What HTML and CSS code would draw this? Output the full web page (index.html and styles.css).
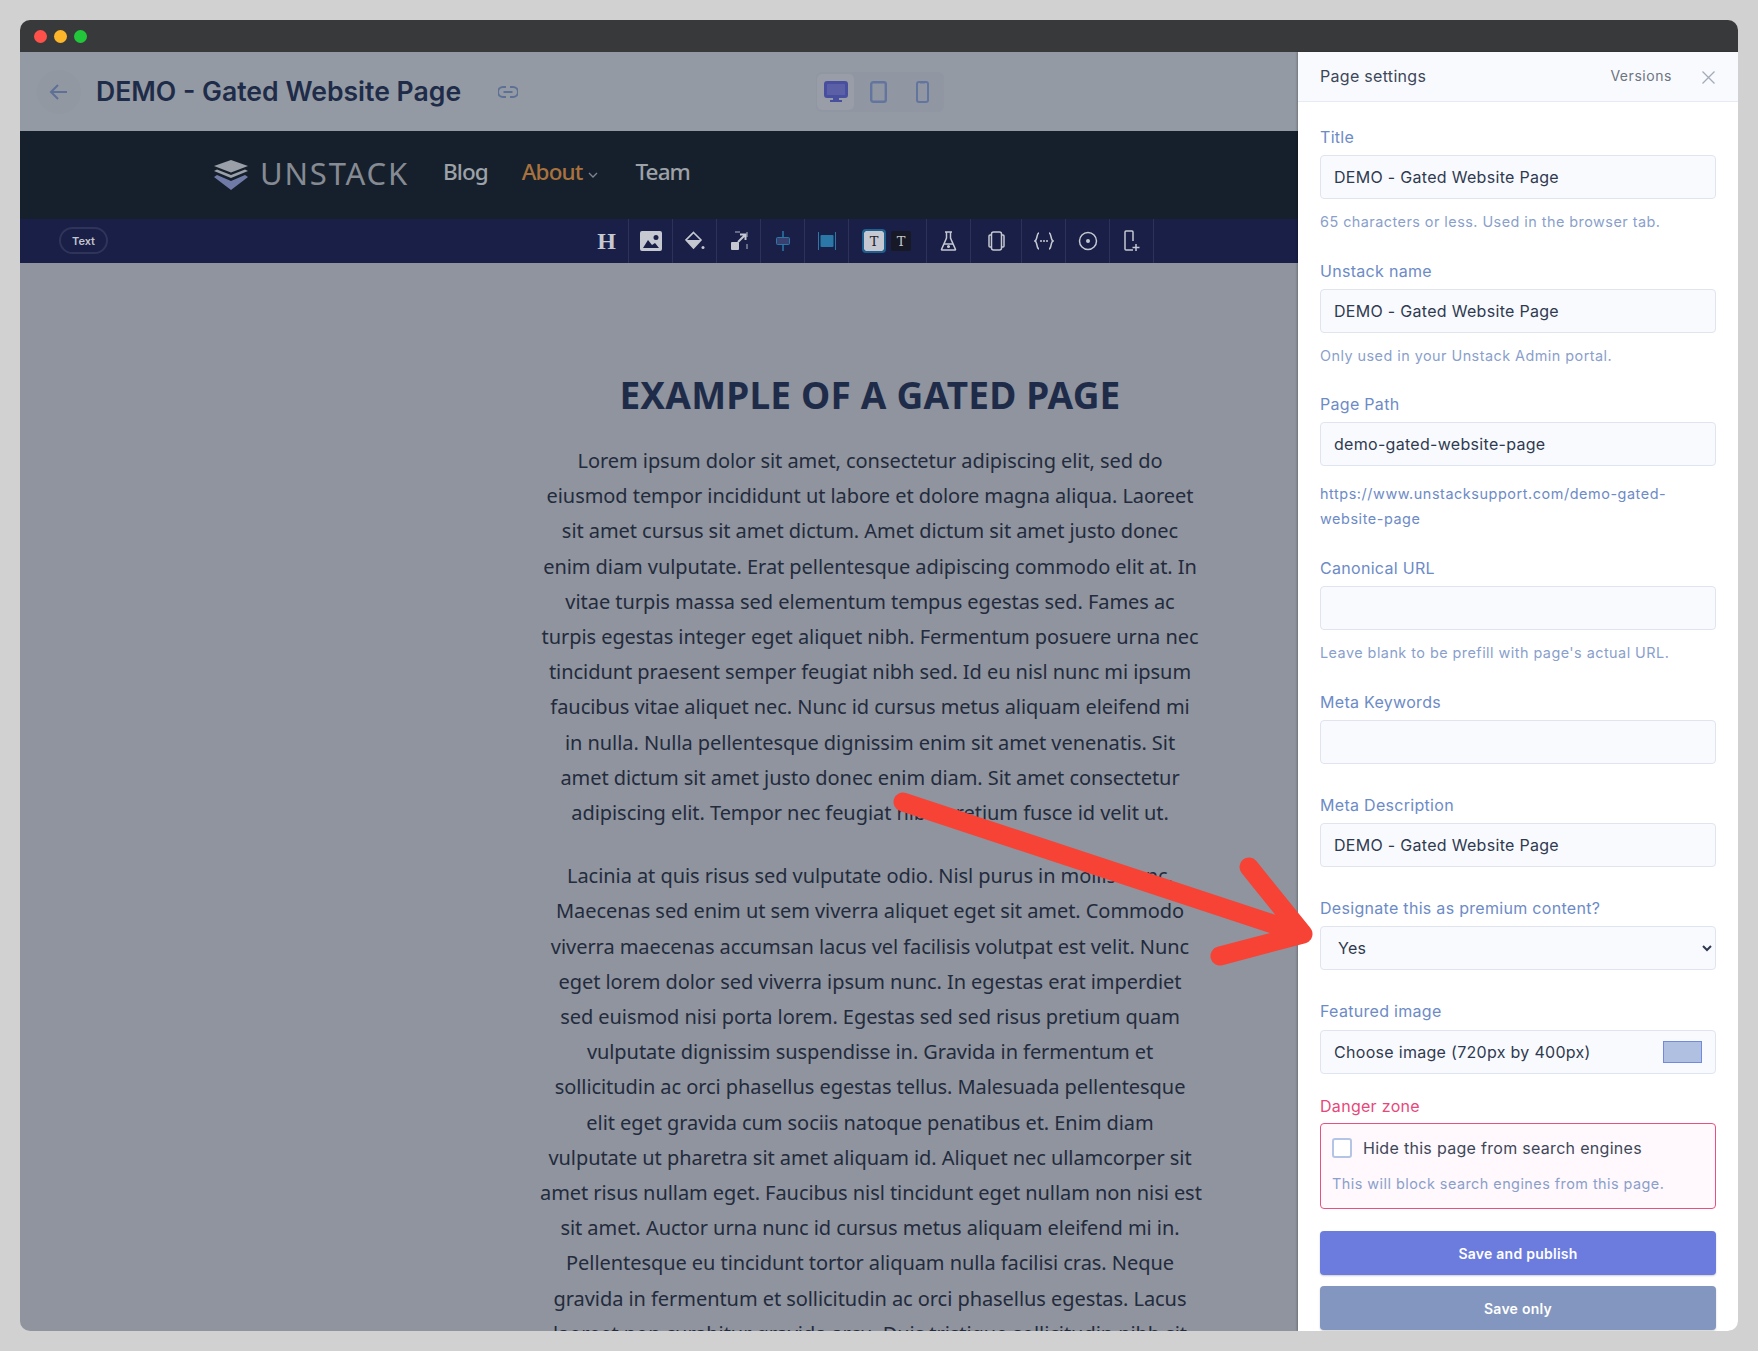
FILE: index.html
```html
<!DOCTYPE html>
<html lang="en">
<head>
<meta charset="UTF-8">
<meta name="viewport" content="width=device-width, initial-scale=1.0">
<link rel="stylesheet" href="styles.css">
<title>DEMO - Gated Website Page</title>
</head>
<body>
  <div class="window">
    <div class="titlebar">
      <span class="dot dot-red"></span>
      <span class="dot dot-yellow"></span>
      <span class="dot dot-green"></span>
    </div>

    <div class="workspace">
      <div class="editor">
        <div class="topbar">
          <div class="back-btn">
            <svg width="22" height="22" viewBox="0 0 22 22" fill="none" stroke="#5f7096" stroke-width="2"><path d="M19 11H3M10 4l-7 7 7 7"/></svg>
          </div>
          <div class="page-name">DEMO - Gated Website Page</div>
          <svg class="link-icon" width="20" height="12" viewBox="0 0 20 12" fill="none" stroke="#5f7096" stroke-width="2"><path d="M8 1H5a4.500 4.500 0 0 0 0 10h3M12 1h3a4.500 4.500 0 0 1 0 10h-3M5.500 6h9"/></svg>
          <div class="devices">
            <div class="device device-active">
              <svg width="24" height="22" viewBox="0 0 24 22" fill="none"><rect x="1.500" y="1.500" width="21" height="14" rx="1.500" stroke="#484f9e" stroke-width="3" fill="#5a5fa6"/><path d="M9 16h6v3h3v2H6v-2h3z" fill="#484f9e"/></svg>
            </div>
            <div class="device device-tablet">
              <svg width="17" height="22" viewBox="0 0 17 22" fill="none"><rect x="1.200" y="1.200" width="14.600" height="19.600" rx="2" stroke="#62759f" stroke-width="2.400"/></svg>
            </div>
            <div class="device">
              <svg width="13" height="22" viewBox="0 0 13 22" fill="none"><rect x="1" y="1" width="11" height="20" rx="2" stroke="#62759f" stroke-width="2"/><path d="M4 1.500h5" stroke="#62759f" stroke-width="2"/></svg>
            </div>
          </div>
        </div>

        <nav class="site-nav">
          <svg class="logo" width="34" height="30" viewBox="0 0 34 30">
            <path d="M17 0l17 6-17 6.500L0 6z" fill="#9a9fa8"/>
            <path d="M0 11l3-1.500 14 5.500 14-5.500 3 1.500-17 7z" fill="#9a9fa8"/>
            <path d="M0 17l3-2 14 6 14-6 3 2-17 13z" fill="#6f7aa6"/>
          </svg>
          <span class="brand">UNSTACK</span>
          <a class="nav-link nav-blog">Blog</a>
          <a class="nav-link nav-about">About</a>
          <svg class="nav-caret" width="10" height="6" viewBox="0 0 10 6" fill="none" stroke="#7f8590" stroke-width="1.300"><path d="M1 1l4 4 4-4"/></svg>
          <a class="nav-link nav-team">Team</a>
        </nav>

        <div class="toolbar">
          <span class="text-badge">Text</span>
          <div class="tools">
            <div class="tool"><span class="glyph-h">H</span></div>
            <div class="tool">
              <svg width="22" height="20" viewBox="0 0 22 20"><path fill="#c5c8d0" d="M2 0h18a2 2 0 0 1 2 2v16a2 2 0 0 1-2 2H2a2 2 0 0 1-2-2V2a2 2 0 0 1 2-2zm14 4a2.500 2.500 0 1 0 0 5 2.500 2.500 0 0 0 0-5zM3 17h16l-4-5-3 2-4-5z" fill-rule="evenodd"/></svg>
            </div>
            <div class="tool">
              <svg width="20" height="20" viewBox="0 0 20 20"><path fill="none" stroke="#c5c8d0" stroke-width="1.600" d="M8.500 1.500l7.500 7.500-7.500 8L1 9z"/><path fill="#c5c8d0" d="M1 9h15l-7.500 8z"/><circle cx="18" cy="16.500" r="1.500" fill="#c5c8d0"/></svg>
            </div>
            <div class="tool">
              <svg width="18" height="20" viewBox="0 0 18 20" fill="none"><path d="M5 1h12v18h-5" stroke="#c5c8d0" stroke-width="1.500" stroke-dasharray="5 7" opacity=".6"/><rect x="1" y="11" width="8" height="8" rx="1" fill="#c5c8d0"/><path d="M8 11l7-7M10 3.500h5.500V9" stroke="#c5c8d0" stroke-width="2"/></svg>
            </div>
            <div class="tool">
              <svg width="14" height="20" viewBox="0 0 14 20" fill="none"><path d="M7 0v20" stroke="#2b78a8" stroke-width="1.500"/><rect x="0.500" y="6.500" width="13" height="7" rx="1" fill="#37406f" stroke="#2b78a8"/></svg>
            </div>
            <div class="tool">
              <svg width="18" height="18" viewBox="0 0 18 18" fill="none"><path d="M.5 0v18M17.500 0v18" stroke="#2b78a8"/><rect x="2.500" y="3" width="13" height="12" rx="1" fill="#2b78a8"/></svg>
            </div>
            <div class="tool tool-text">
              <span class="t-box t-light">T</span>
              <span class="t-box t-dark">T</span>
            </div>
            <div class="tool">
              <svg width="17" height="20" viewBox="0 0 17 20" fill="none" stroke="#c5c8d0" stroke-width="1.500"><path d="M5 1h7M6.500 1v6L1.500 18.500a.500.500 0 0 0 .5.500h13a.500.500 0 0 0 .5-.500L10.500 7V1"/><path d="M4 13h9" /><circle cx="8.500" cy="15.500" r=".8"/></svg>
            </div>
            <div class="tool tool-wide">
              <svg width="17" height="20" viewBox="0 0 17 20" fill="none" stroke="#c5c8d0" stroke-width="1.500"><rect x="3.500" y="1" width="10" height="18" rx="2"/><path d="M3.500 4H2a1 1 0 0 0-1 1v10a1 1 0 0 0 1 1h1.500M13.500 4H15a1 1 0 0 1 1 1v10a1 1 0 0 1-1 1h-1.500"/></svg>
            </div>
            <div class="tool">
              <svg width="20" height="18" viewBox="0 0 20 18" fill="none" stroke="#c5c8d0" stroke-width="1.500"><path d="M5 1C2.500 1 3.500 8 1 9c2.500 1 1.500 8 4 8M15 1c2.500 0 1.500 7 4 8-2.500 1-1.500 8-4 8"/><path d="M7 9h.01M10 9h.01M13 9h.01" stroke-width="2" stroke-linecap="round"/></svg>
            </div>
            <div class="tool">
              <svg width="20" height="20" viewBox="0 0 20 20" fill="none"><circle cx="10" cy="10" r="8.500" stroke="#c5c8d0" stroke-width="1.500"/><circle cx="10" cy="10" r="2" fill="#c5c8d0"/></svg>
            </div>
            <div class="tool">
              <svg width="16" height="22" viewBox="0 0 16 22" fill="none" stroke="#c5c8d0" stroke-width="1.500"><path d="M9 20H2a1 1 0 0 1-1-1V2a1 1 0 0 1 1-1h6a1 1 0 0 1 1 1v9M3.500 1h3M12 14v7M8.500 17.500h7"/></svg>
            </div>
          </div>
        </div>

        <div class="page-canvas">
          <div class="article">
            <h1>EXAMPLE OF A GATED PAGE</h1>
            <p>Lorem ipsum dolor sit amet, consectetur adipiscing elit, sed do<br>
            eiusmod tempor incididunt ut labore et dolore magna aliqua. Laoreet<br>
            sit amet cursus sit amet dictum. Amet dictum sit amet justo donec<br>
            enim diam vulputate. Erat pellentesque adipiscing commodo elit at. In<br>
            vitae turpis massa sed elementum tempus egestas sed. Fames ac<br>
            turpis egestas integer eget aliquet nibh. Fermentum posuere urna nec<br>
            tincidunt praesent semper feugiat nibh sed. Id eu nisl nunc mi ipsum<br>
            faucibus vitae aliquet nec. Nunc id cursus metus aliquam eleifend mi<br>
            in nulla. Nulla pellentesque dignissim enim sit amet venenatis. Sit<br>
            amet dictum sit amet justo donec enim diam. Sit amet consectetur<br>
            adipiscing elit. Tempor nec feugiat nibh pretium fusce id velit ut.</p>
            <p>Lacinia at quis risus sed vulputate odio. Nisl purus in mollis nunc.<br>
            Maecenas sed enim ut sem viverra aliquet eget sit amet. Commodo<br>
            viverra maecenas accumsan lacus vel facilisis volutpat est velit. Nunc<br>
            eget lorem dolor sed viverra ipsum nunc. In egestas erat imperdiet<br>
            sed euismod nisi porta lorem. Egestas sed sed risus pretium quam<br>
            vulputate dignissim suspendisse in. Gravida in fermentum et<br>
            sollicitudin ac orci phasellus egestas tellus. Malesuada pellentesque<br>
            elit eget gravida cum sociis natoque penatibus et. Enim diam<br>
            vulputate ut pharetra sit amet aliquam id. Aliquet nec ullamcorper sit<br>
            amet risus nullam eget. Faucibus nisl tincidunt eget nullam non nisi est<br>
            sit amet. Auctor urna nunc id cursus metus aliquam eleifend mi in.<br>
            Pellentesque eu tincidunt tortor aliquam nulla facilisi cras. Neque<br>
            gravida in fermentum et sollicitudin ac orci phasellus egestas. Lacus<br>
            laoreet non curabitur gravida arcu. Duis tristique sollicitudin nibh sit</p>
          </div>
        </div>
      </div>

      <aside class="panel">
        <div class="panel-head">
          <span class="panel-title">Page settings</span>
          <span class="panel-versions">Versions</span>
          <svg class="panel-close" width="13" height="13" viewBox="0 0 13 13" fill="none" stroke="#a3abb8" stroke-width="1.300"><path d="M.5.500l12 12M12.500.500l-12 12"/></svg>
        </div>
        <div class="panel-body">
          <div class="field">
            <label>Title</label>
            <input type="text" value="DEMO - Gated Website Page">
            <div class="help">65 characters or less. Used in the browser tab.</div>
          </div>
          <div class="field field-tight">
            <label>Unstack name</label>
            <input type="text" value="DEMO - Gated Website Page">
            <div class="help">Only used in your Unstack Admin portal.</div>
          </div>
          <div class="field field-url">
            <label>Page Path</label>
            <input type="text" value="demo-gated-website-page">
            <div class="help help-url">https://www.unstacksupport.com/demo-gated-<br>website-page</div>
          </div>
          <div class="field">
            <label>Canonical URL</label>
            <input type="text">
            <div class="help">Leave blank to be prefill with page's actual URL.</div>
          </div>
          <div class="field field-plain">
            <label>Meta Keywords</label>
            <input type="text">
          </div>
          <div class="field field-plain">
            <label>Meta Description</label>
            <input type="text" value="DEMO - Gated Website Page">
          </div>
          <div class="field field-plain">
            <label>Designate this as premium content?</label>
            <select><option>Yes</option></select>
          </div>
          <div class="field field-image">
            <label>Featured image</label>
            <div class="image-picker">
              <span>Choose image (720px by 400px)</span>
              <span class="swatch"></span>
            </div>
          </div>
          <div class="danger-label">Danger zone</div>
          <div class="danger-box">
            <div class="check-row">
              <span class="checkbox"></span>
              <span>Hide this page from search engines</span>
            </div>
            <div class="help">This will block search engines from this page.</div>
          </div>
          <button class="btn btn-publish">Save and publish</button>
          <button class="btn btn-save">Save only</button>
        </div>
      </aside>
    </div>

    <svg class="annotation" width="440" height="180" viewBox="0 0 440 180" fill="none" stroke="#f64336" stroke-width="19" stroke-linecap="round" stroke-linejoin="round">
      <path d="M13 12L413 144M359 77L413 144L330 166"/>
    </svg>
  </div>
</body>
</html>
```

FILE: styles.css
```css
* {
  box-sizing: border-box;
}

body {
  margin: 0;
  height: 1351px;
  padding: 20px;
  overflow: hidden;
  background-color: #d1d1d1;
  font-family: Inter, Arial, sans-serif;
}

.window {
  position: relative;
  height: 1311px;
  display: flex;
  flex-direction: column;
  border-radius: 10px;
  overflow: hidden;
}

.titlebar {
  height: 32px;
  flex-shrink: 0;
  display: flex;
  align-items: center;
  gap: 7px;
  padding: 0 0 0 14px;
  background-color: #38393b;
}

.dot {
  width: 13px;
  height: 13px;
  border-radius: 50%;
}

.dot-red { background-color: #ff5149; }
.dot-yellow { background-color: #fdb62a; }
.dot-green { background-color: #22c63a; }

.workspace {
  flex: 1;
  min-height: 0;
  display: flex;
}

.editor {
  flex: 1;
  min-width: 0;
  display: flex;
  flex-direction: column;
  background-color: #8f949f;
}

/* top bar */
.topbar {
  height: 79px;
  flex-shrink: 0;
  display: flex;
  align-items: center;
  padding-left: 17px;
  background-color: #949aa3;
}

.back-btn {
  width: 44px;
  height: 44px;
  border-radius: 50%;
  display: flex;
  align-items: center;
  justify-content: center;
  background-color: #9198a2;
}

.page-name {
  margin-left: 15px;
  margin-top: -2px;
  font-size: 26.6px;
  font-weight: 600;
  color: #1f2c49;
}

.link-icon {
  margin-left: 37px;
}

.devices {
  margin-left: 298px;
  width: 128px;
  height: 40px;
  display: flex;
  align-items: center;
  padding-left: 1px;
  border-radius: 6px;
  background-color: #9197a2;
}

.device {
  width: 37px;
  height: 36px;
  flex-shrink: 0;
  margin-right: 6px;
  display: flex;
  align-items: center;
  justify-content: center;
  border-radius: 5px;
}

.device-tablet {
  margin-right: 7px;
}

.device-active {
  background-color: #989da8;
}

/* website nav */
.site-nav {
  height: 88px;
  flex-shrink: 0;
  display: flex;
  align-items: center;
  padding-left: 195px;
  background-color: #16202c;
}

.logo {
  margin-left: -1px;
}

.brand {
  margin-left: 12px;
  margin-bottom: 4px;
  font-family: "Noto Sans", sans-serif;
  font-size: 31px;
  letter-spacing: 1.8px;
  color: #868b93;
}

.nav-link {
  margin-bottom: 8px;
  font-family: "Noto Sans", sans-serif;
  font-size: 22.5px;
  font-weight: 500;
  letter-spacing: -0.9px;
  color: #9da1a8;
}

.nav-blog { margin-left: 34px; }
.nav-about { margin-left: 34px; color: #a8723e; }
.nav-team { margin-left: 37px; }

.nav-caret {
  margin-left: 6px;
  margin-bottom: 1px;
}

/* block toolbar */
.toolbar {
  height: 44px;
  flex-shrink: 0;
  display: flex;
  align-items: center;
  justify-content: space-between;
  padding: 0 144px 0 39px;
  background-color: #191f47;
}

.text-badge {
  width: 49px;
  height: 27px;
  margin-top: -1px;
  display: flex;
  align-items: center;
  justify-content: center;
  border: 2px solid #2f3559;
  border-radius: 14px;
  font-size: 11px;
  font-weight: 600;
  color: #c2c5cd;
}

.tools {
  display: flex;
  height: 44px;
}

.tool {
  width: 44px;
  display: flex;
  align-items: center;
  justify-content: center;
  border-right: 1px solid #2c3259;
}

.tool-text {
  width: 78px;
  gap: 7px;
}

.tool-wide {
  width: 51px;
}

.glyph-h {
  font-family: "Liberation Serif", serif;
  font-size: 24px;
  font-weight: 700;
  color: #c5c8d0;
}

.t-box {
  width: 20px;
  height: 20px;
  display: flex;
  align-items: center;
  justify-content: center;
  border-radius: 2px;
  font-family: "DejaVu Serif", serif;
  font-size: 13px;
}

.t-light {
  background-color: #c5c8d0;
  color: #1a1c2c;
  outline: 2px solid #20608f;
  outline-offset: 0;
}

.t-dark {
  background-color: #171a26;
  color: #c5c8d0;
}

/* page content */
.page-canvas {
  flex: 1;
  min-height: 0;
  overflow: hidden;
  padding: 110px 0 0 520px;
}

.article {
  width: 660px;
  text-align: center;
  font-family: "Noto Sans", sans-serif;
  color: #232b3c;
}

.article h1 {
  margin: 0 0 26px;
  font-size: 37px;
  line-height: 44px;
  font-weight: 700;
  letter-spacing: 0.2px;
  color: #1f2c49;
}

.article p {
  margin: 0 0 28px;
  font-size: 20px;
  line-height: 35.2px;
  white-space: nowrap;
  letter-spacing: -0.06px;
}

/* settings panel */
.panel {
  width: 440px;
  flex-shrink: 0;
  display: flex;
  flex-direction: column;
  background-color: #fff;
  box-shadow: -1px 0 2px rgba(0, 0, 0, 0.25);
}

.panel-head {
  height: 50px;
  flex-shrink: 0;
  display: flex;
  align-items: center;
  padding: 0 22px;
  background-color: #f9fafe;
  border-bottom: 1px solid #e6eaf2;
}

.panel-title {
  margin-top: -2px;
  font-size: 16px;
  letter-spacing: 0.3px;
  color: #3c4759;
}

.panel-versions {
  margin-left: auto;
  margin-top: -2px;
  font-size: 14px;
  letter-spacing: 0.55px;
  color: #6d7481;
}

.panel-close {
  margin-left: 30px;
  margin-top: 2px;
  margin-right: 1px;
}

.panel-body {
  padding: 23px 22px 0;
}

.field {
  margin-bottom: 26px;
}

.field-tight {
  margin-bottom: 25px;
}

.field-url {
  margin-bottom: 25px;
}

.field-plain {
  margin-bottom: 29px;
}

.field-image {
  margin-bottom: 20px;
}

.field-image label {
  margin-bottom: 7px;
}

label,
.danger-label {
  display: block;
  margin-bottom: 6px;
  font-size: 16px;
  line-height: 24px;
  letter-spacing: 0.3px;
  color: #6d8bc6;
}

input[type="text"],
select,
.image-picker {
  display: block;
  width: 100%;
  height: 44px;
  padding: 0 13px;
  border: 1px solid #dfe4ef;
  border-radius: 4px;
  background-color: #f9fafe;
  font-family: Inter, Arial, sans-serif;
  font-size: 16px;
  letter-spacing: 0.3px;
  color: #2f3a50;
}

.image-picker {
  display: flex;
  align-items: center;
  justify-content: space-between;
}

.swatch {
  width: 39px;
  height: 22px;
  background-color: #b0c0e0;
  border: 1px solid #7389e0;
}

.help {
  margin-top: 12px;
  font-size: 14.4px;
  line-height: 22px;
  letter-spacing: 0.47px;
  color: #8a9fcb;
}

.help-url {
  margin-top: 15px;
  line-height: 25px;
  letter-spacing: 0.57px;
  color: #6d8bc6;
}

.danger-label {
  margin-bottom: 5px;
  color: #e6487a;
}

.danger-box {
  height: 86px;
  padding: 13px 11px 0;
  margin-bottom: 22px;
  border: 1px solid #e6527f;
  border-radius: 4px;
  background-color: #fff8fc;
}

.danger-box .help {
  margin-top: 14px;
}

.check-row {
  display: flex;
  align-items: center;
  gap: 11px;
  font-size: 16px;
  line-height: 22px;
  letter-spacing: 0.3px;
  color: #3c4759;
}

.checkbox {
  width: 20px;
  height: 20px;
  border: 2px solid #b4c4e4;
  border-radius: 3px;
  background-color: #fff;
}

.btn {
  display: block;
  width: 100%;
  height: 44px;
  margin-bottom: 11px;
  border: none;
  border-radius: 4px;
  font-family: Inter, Arial, sans-serif;
  font-size: 14px;
  font-weight: 600;
  letter-spacing: 0.25px;
  color: #fff;
  box-shadow: 0 1px 2px rgba(0, 0, 0, 0.2);
}

.btn-publish {
  background-color: #6b7cde;
}

.btn-save {
  background-color: #8296bf;
}

/* red hand drawn arrow over the screenshot */
.annotation {
  position: absolute;
  left: 870px;
  top: 770px;
  pointer-events: none;
}
```
